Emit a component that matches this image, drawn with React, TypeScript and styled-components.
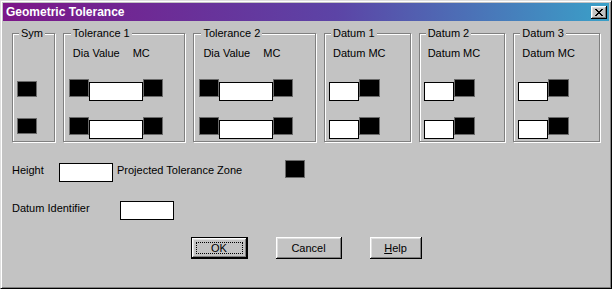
import React from "react";
import styled, { createGlobalStyle } from "styled-components";

// Global
const GlobalStyle = createGlobalStyle`
  html, body {
    margin: 0;
    padding: 0;
    background: #c3c3c3;
  }
  body {
    font-family: "Liberation Sans", Arial, sans-serif;
    font-size: 11px;
    color: #000;
  }
`;

// Window chrome
const Window = styled.div`
  box-sizing: border-box;
  width: 612px;
  height: 289px;
  padding: 2px;
  background: #c3c3c3;
  border: 1px solid;
  border-color: #dfdfdf #000 #000 #dfdfdf;
  box-shadow: inset 1px 1px #fff, inset -1px -1px #808080;
  display: flex;
  flex-direction: column;
`;
const TitleBar = styled.div`
  height: 18px;
  flex: none;
  display: flex;
  align-items: center;
  justify-content: space-between;
  padding: 0 2px 0 3px;
  background: linear-gradient(to right, #7c1688 0%, #5c44a6 55%, #3aa0c8 100%);
`;
const Title = styled.span`
  color: #fff;
  font-weight: bold;
  font-size: 12px;
  line-height: 14px;
`;
const CloseButton = styled.button`
  box-sizing: border-box;
  width: 16px;
  height: 13px;
  padding: 0;
  border: none;
  background: #c3c3c3;
  box-shadow: inset -1px -1px #000, inset 1px 1px #fff, inset -2px -2px #808080,
    inset 2px 2px #dfdfdf;
  display: flex;
  align-items: center;
  justify-content: center;
`;

// Body
const Body = styled.div`
  padding: 6px 9px 0 9px;
  display: flex;
  flex-direction: column;
`;
const Groups = styled.div`
  display: flex;
  gap: 8px;
`;
const Group = styled.fieldset<{ $width: number; $inset: number }>`
  box-sizing: border-box;
  width: ${(p) => p.$width}px;
  height: 115px;
  min-inline-size: 0;
  margin: 0;
  padding: 7px 0 0 ${(p) => p.$inset}px;
  border: 1px solid #808080;
  box-shadow: 1px 1px 0 #fff, inset 1px 1px 0 #fff;
  display: flex;
  flex-direction: column;
`;
const Legend = styled.legend`
  margin-left: 2px;
  padding: 0 2px;
  font-size: 11px;
  line-height: 13px;
  background: #c3c3c3;
`;
const Header = styled.div`
  height: 13px;
  line-height: 13px;
  padding-left: 4px;
  white-space: nowrap;
  margin-bottom: 19px;
`;
const HeaderWord = styled.span<{ $gap: number }>`
  margin-right: ${(p) => p.$gap}px;
`;
const Row = styled.div`
  display: flex;
  align-items: flex-start;
  height: 22px;
  margin-bottom: 16px;
`;
const SymColumn = styled.div`
  display: flex;
  flex-direction: column;
  gap: 21px;
  padding-top: 34px;
`;
const Swatch = styled.div<{ $w: number; $h: number }>`
  box-sizing: border-box;
  flex: none;
  width: ${(p) => p.$w}px;
  height: ${(p) => p.$h}px;
  background: #000;
  border: 1px solid #6a6a6a;
`;
const Field = styled.div<{ $w: number; $top?: number }>`
  box-sizing: border-box;
  flex: none;
  width: ${(p) => p.$w}px;
  height: 19px;
  margin-top: ${(p) => p.$top ?? 0}px;
  background: #fff;
  border: 1px solid #000;
`;

// Lower form
const FormRow = styled.div<{ $top: number }>`
  display: flex;
  align-items: flex-start;
  margin-top: ${(p) => p.$top}px;
`;
const FormLabel = styled.span<{ $w: number; $top: number; $indent?: number }>`
  box-sizing: border-box;
  flex: none;
  width: ${(p) => p.$w}px;
  margin-top: ${(p) => p.$top}px;
  padding-left: ${(p) => p.$indent ?? 0}px;
  line-height: 13px;
  white-space: nowrap;
`;
const ButtonRow = styled.div`
  display: flex;
  justify-content: center;
  gap: 28px;
  margin-top: 17px;
`;
const Button = styled.button<{ $w: number; $default?: boolean }>`
  box-sizing: border-box;
  width: ${(p) => p.$w}px;
  height: 22px;
  padding: 0;
  font-family: "Liberation Sans", Arial, sans-serif;
  font-size: 11px;
  color: #000;
  background: #c3c3c3;
  border: ${(p) => (p.$default ? "1px solid #000" : "none")};
  box-shadow: inset -1px -1px #000, inset 1px 1px #fff, inset -2px -2px #808080,
    inset 2px 2px #dfdfdf;
  display: flex;
  align-items: center;
  justify-content: center;
`;
const FocusRing = styled.span`
  box-sizing: border-box;
  width: calc(100% - 8px);
  height: calc(100% - 8px);
  border: 1px dotted #000;
  display: flex;
  align-items: center;
  justify-content: center;
`;

const CloseGlyph = () => (
  <svg width="8" height="7" viewBox="0 0 8 7" shapeRendering="crispEdges">
    <path
      fill="#000"
      d="M0 0h2v1H0zM6 0h2v1H6zM1 1h2v1H1zM5 1h2v1H5zM2 2h4v1H2zM3 3h2v1H3zM2 4h4v1H2zM1 5h2v1H1zM5 5h2v1H5zM0 6h2v1H0zM6 6h2v1H6z"
    />
  </svg>
);

const ToleranceGroup = ({ title }: { title: string }) => (
  <Group $width={123} $inset={5}>
    <Legend>{title}</Legend>
    <Header>
      <HeaderWord $gap={3}>Dia</HeaderWord>
      <HeaderWord $gap={13}>Value</HeaderWord>
      <HeaderWord $gap={0}>MC</HeaderWord>
    </Header>
    {[0, 1].map((i) => (
      <Row key={i}>
        <Swatch $w={20} $h={18} />
        <Field $w={54} $top={3} />
        <Swatch $w={20} $h={18} />
      </Row>
    ))}
  </Group>
);

const DatumGroup = ({ title }: { title: string }) => (
  <Group $width={87} $inset={4}>
    <Legend>{title}</Legend>
    <Header>Datum MC</Header>
    {[0, 1].map((i) => (
      <Row key={i}>
        <Field $w={30} $top={3} />
        <Swatch $w={21} $h={18} />
      </Row>
    ))}
  </Group>
);

export default function App(): JSX.Element {
  return (
    <>
      <GlobalStyle />
      <Window>
        <TitleBar>
          <Title>Geometric Tolerance</Title>
          <CloseButton aria-label="Close">
            <CloseGlyph />
          </CloseButton>
        </TitleBar>
        <Body>
          <Groups>
            <Group $width={43} $inset={4}>
              <Legend>Sym</Legend>
              <SymColumn>
                <Swatch $w={20} $h={16} />
                <Swatch $w={20} $h={16} />
              </SymColumn>
            </Group>
            <ToleranceGroup title="Tolerance 1" />
            <ToleranceGroup title="Tolerance 2" />
            <DatumGroup title="Datum 1" />
            <DatumGroup title="Datum 2" />
            <DatumGroup title="Datum 3" />
          </Groups>

          <FormRow $top={18}>
            <FormLabel $w={47} $top={4}>Height</FormLabel>
            <Field $w={54} $top={3} />
            <FormLabel $w={172} $top={4} $indent={4}>
              Projected Tolerance Zone
            </FormLabel>
            <Swatch $w={20} $h={18} />
          </FormRow>

          <FormRow $top={19}>
            <FormLabel $w={108} $top={1}>Datum Identifier</FormLabel>
            <Field $w={54} />
          </FormRow>

          <ButtonRow>
            <Button $w={57} $default>
              <FocusRing>OK</FocusRing>
            </Button>
            <Button $w={66}>Cancel</Button>
            <Button $w={52}>
              <span>
                <u>H</u>elp
              </span>
            </Button>
          </ButtonRow>
        </Body>
      </Window>
    </>
  );
}
